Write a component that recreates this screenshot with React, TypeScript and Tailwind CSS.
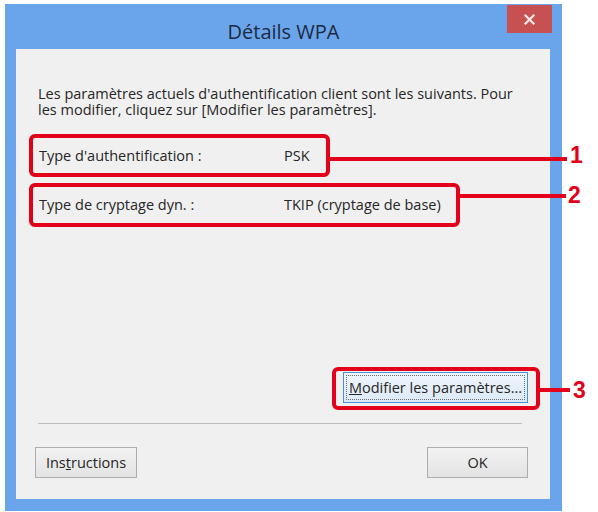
export default function App() {
  return (
    <div className="relative w-[598px] h-[512px] bg-white overflow-hidden pt-[4px] pl-[5px] font-['Open_Sans',sans-serif] text-[#262626]">
      <div className="w-[557px] h-[507px] bg-[#6aa5ec] flex flex-col">
        <div className="relative h-[45px] pt-[16px] text-center text-[20px] leading-[24px] text-[#1c2b40]">
          Détails WPA
          <div className="absolute top-[1px] right-[10px] w-[45px] h-[28px] bg-[#c75050] flex items-center justify-center">
            <svg width="11" height="11" viewBox="0 0 11 11">
              <path d="M1.5 1.5 L9.5 9.5 M9.5 1.5 L1.5 9.5" stroke="#fbe9e9" strokeWidth="2.2" strokeLinecap="square" />
            </svg>
          </div>
        </div>
        <div className="ml-[11px] mr-[12px] h-[450px] bg-[#f0f0f0] flex flex-col text-[14.5px] leading-[16px]">
          <div className="mt-[37px] ml-[22px] whitespace-nowrap">
            <div className="h-[16px]">Les paramètres actuels d'authentification client sont les suivants. Pour</div>
            <div className="h-[16px]">les modifier, cliquez sur [Modifier les paramètres].</div>
          </div>
          <div className="mt-[16px] ml-[13px] w-[301px] h-[43px] border-4 border-[#e2001a] rounded-[6px] flex items-center pl-[6px] whitespace-nowrap">
            <span className="w-[245px]">Type d'authentification :</span>
            <span>PSK</span>
          </div>
          <div className="mt-[6px] ml-[13px] w-[431px] h-[44px] border-4 border-[#e2001a] rounded-[6px] flex items-center pl-[6px] whitespace-nowrap">
            <span className="w-[245px]">Type de cryptage dyn. :</span>
            <span>TKIP (cryptage de base)</span>
          </div>
          <div className="mt-[140px] self-end mr-[10px] w-[208px] h-[43px] border-4 border-[#e2001a] rounded-[6px] pt-[1px] pl-[7px]">
            <button className="w-[185px] h-[31px] flex items-center justify-center border border-[#4a90d9] bg-gradient-to-b from-[#eef5fc] to-[#dce9f7] outline outline-1 outline-dotted outline-[#6d6d6d] outline-offset-[-4px] whitespace-nowrap">
              <span><span className="underline">M</span>odifier les paramètres...</span>
            </button>
          </div>
          <div className="mt-[13px] ml-[22px] mr-[28px] border-t border-[#bdbdbd]" />
          <div className="mt-[23px] flex justify-between pl-[19px] pr-[22px]">
            <button className="w-[102px] h-[31px] flex items-center justify-center border border-[#adadad] bg-gradient-to-b from-[#f2f2f2] to-[#e3e3e3]">
              <span>Ins<span className="underline">t</span>ructions</span>
            </button>
            <button className="w-[101px] h-[31px] flex items-center justify-center border border-[#adadad] bg-gradient-to-b from-[#f2f2f2] to-[#e3e3e3]">
              OK
            </button>
          </div>
        </div>
      </div>

      <div className="absolute left-[330px] top-[157px] w-[237px] h-[4px] bg-[#e2001a]" />
      <div className="absolute left-[570px] top-[144px] font-['Liberation_Sans',sans-serif] font-bold text-[23px] leading-none text-[#e2001a]">1</div>
      <div className="absolute left-[460px] top-[194px] w-[106px] h-[4px] bg-[#e2001a]" />
      <div className="absolute left-[568px] top-[184px] font-['Liberation_Sans',sans-serif] font-bold text-[23px] leading-none text-[#e2001a]">2</div>
      <div className="absolute left-[540px] top-[388px] w-[30px] h-[4px] bg-[#e2001a]" />
      <div className="absolute left-[573px] top-[379px] font-['Liberation_Sans',sans-serif] font-bold text-[23px] leading-none text-[#e2001a]">3</div>
    </div>
  );
}
